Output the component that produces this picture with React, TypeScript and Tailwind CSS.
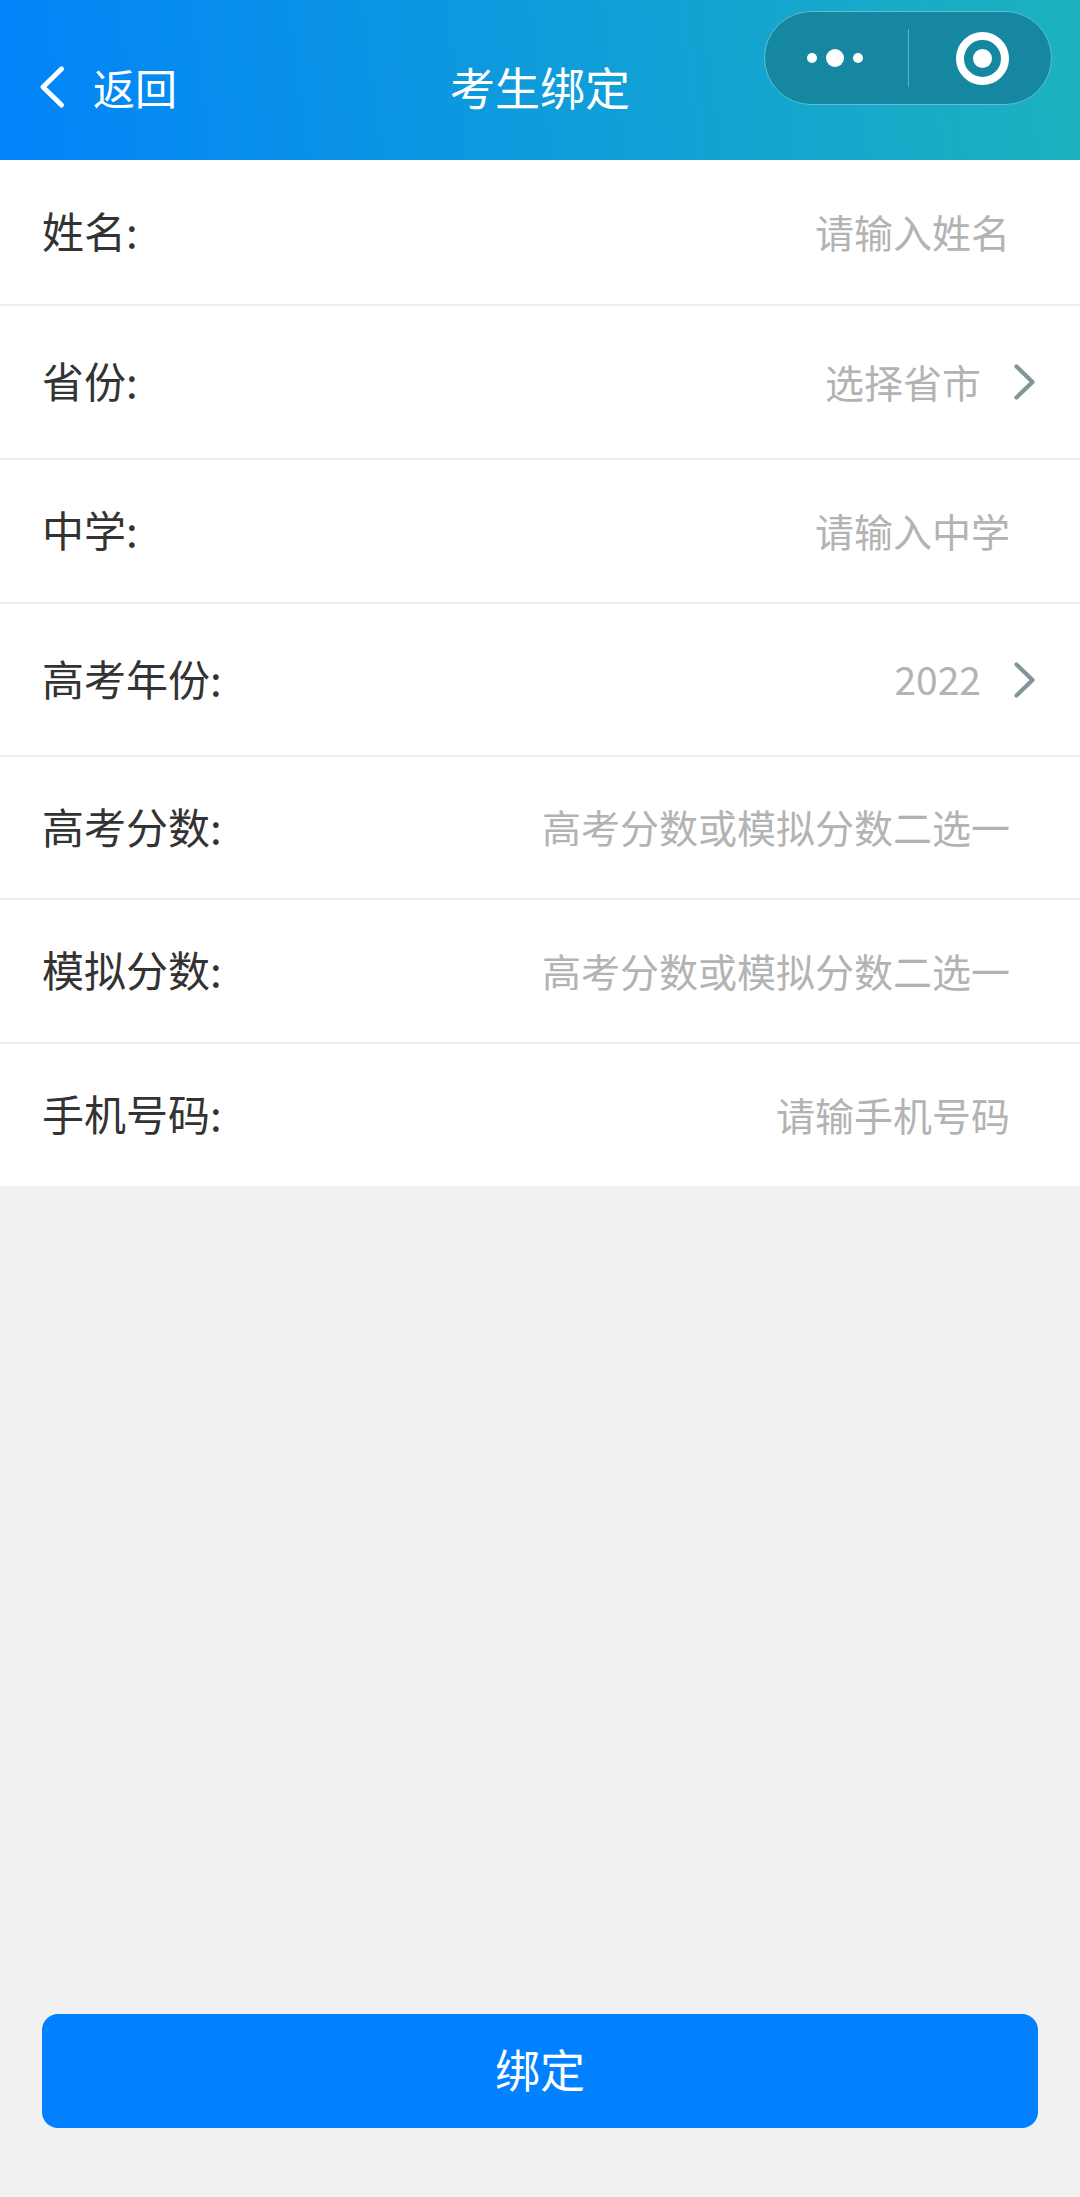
const font = { fontFamily: '"Noto Sans CJK SC", "Noto Sans", sans-serif' };

function Chevron() {
  return (
    <svg width="24" height="38" viewBox="0 0 24 38" fill="none" className="ml-[33px]">
      <path d="M2.5 3.5 L18.5 19 L2.5 34.5" stroke="#84959a" strokeWidth="4.2" strokeLinecap="round" strokeLinejoin="round" />
    </svg>
  );
}

const rows = [
  { label: "姓名:", value: "请输入姓名", h: "h-[144px]", arrow: false },
  { label: "省份:", value: "选择省市", h: "h-[152px]", arrow: true },
  { label: "中学:", value: "请输入中学", h: "h-[142px]", arrow: false },
  { label: "高考年份:", value: "2022", h: "h-[151px]", arrow: true },
  { label: "高考分数:", value: "高考分数或模拟分数二选一", h: "h-[141px]", arrow: false },
  { label: "模拟分数:", value: "高考分数或模拟分数二选一", h: "h-[142px]", arrow: false },
  { label: "手机号码:", value: "请输手机号码", h: "h-[142px]", arrow: false },
];

export default function App() {
  return (
    <div className="flex h-[2197px] w-[1080px] flex-col bg-[#f1f1f1]" style={font}>
      <header className="relative flex h-[160px] items-center justify-center bg-[linear-gradient(82deg,#0184fa,#1cb3bd)] pt-[13px] text-[45px] text-white">
        <div className="absolute left-[38px] top-[65px] flex items-center">
          <svg width="28" height="44" viewBox="0 0 28 44" fill="none">
            <path d="M23.5 4 L5 22 L23.5 40" stroke="#fff" strokeWidth="5" strokeLinecap="round" strokeLinejoin="round" />
          </svg>
          <span className="ml-[27px] text-[42px] leading-[44px]">返回</span>
        </div>
        <span className="leading-none">考生绑定</span>
        <div className="absolute left-[764px] top-[11px] flex h-[94px] w-[288px] items-center rounded-full border border-[#5cc0d0] bg-[#1587a1]">
          <div className="flex w-[143px] items-center justify-center gap-[9px] pr-[3px]">
            <span className="h-[10px] w-[10px] rounded-full bg-white" />
            <span className="h-[18px] w-[18px] rounded-full bg-white" />
            <span className="h-[10px] w-[10px] rounded-full bg-white" />
          </div>
          <div className="h-[58px] w-px bg-[#59b3c6]" />
          <div className="flex flex-1 items-center justify-center pl-[4px]">
            <div className="flex h-[53px] w-[53px] items-center justify-center rounded-full border-[8px] border-white">
              <span className="h-[19px] w-[19px] rounded-full bg-white" />
            </div>
          </div>
        </div>
      </header>
      <main className="flex flex-col gap-[2px] bg-[#ececec]">
        {rows.map((r) => (
          <div key={r.label} className={`flex items-center justify-between bg-white pl-[42px] pr-[42px] ${r.h}`}>
            <span className="pb-[5px] text-[42px] text-[#333333]">{r.label}</span>
            <div className="flex items-center">
              <span className={`pb-[2px] text-[39px] text-[#b3b3b3] ${r.arrow ? "" : "pr-[28px]"}`}>{r.value}</span>
              {r.arrow && <Chevron />}
            </div>
          </div>
        ))}
      </main>
      <div className="mt-auto px-[42px] pb-[69px]">
        <button className="flex h-[114px] w-full items-center justify-center rounded-[16px] bg-[#0181ff] pb-[4px] text-[45px] text-white">
          绑定
        </button>
      </div>
    </div>
  );
}
